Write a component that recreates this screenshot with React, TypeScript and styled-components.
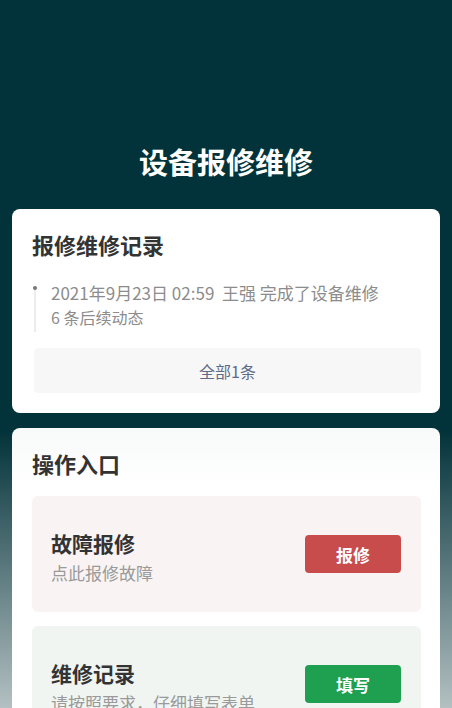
import React from "react";
import styled, { createGlobalStyle } from "styled-components";

const GlobalStyle = createGlobalStyle`
    html, body {
        margin: 0;
        padding: 0;
    }
    body {
        font-family: "Noto Sans CJK SC", "Noto Sans", sans-serif;
        background: #03333a;
    }
`;

const Page = styled.div`
    height: 708px;
    overflow: hidden;
    background: linear-gradient(to bottom, #03333a 0%, #03333a 61%, #b4c0c2 100%);
    padding: 141px 12px 0;
    box-sizing: border-box;
`;

const PageTitle = styled.h1`
    margin: 0 0 28px;
    text-align: center;
    color: #fff;
    font-size: 29px;
    line-height: 40px;
    font-weight: 700;
`;

const Card = styled.section<{ $fade?: boolean }>`
    background: ${({ $fade }) => ($fade ? "linear-gradient(to bottom, #f8f9f9, #fff 60px)" : "#fff")};
    border-radius: 8px;
    padding: 20px 19px 20px 20px;
    margin-bottom: 15px;
`;

const CardTitle = styled.h2`
    margin: 0;
    font-size: 22px;
    line-height: 30px;
    font-weight: 700;
    color: #333;
`;

const Timeline = styled.div`
    margin: 21px 0 0 2px;
    padding-left: 17px;
    position: relative;

    &::before {
        content: "";
        position: absolute;
        left: 0;
        top: 8px;
        bottom: -2px;
        width: 2px;
        background: #ececec;
    }

    &::after {
        content: "";
        position: absolute;
        left: -1px;
        top: 6px;
        width: 4px;
        height: 4px;
        border-radius: 50%;
        background: #777;
    }
`;

const TimelineLine = styled.div<{ $size: number }>`
    font-size: ${({ $size }) => $size}px;
    line-height: 25px;
    color: #8c8c8c;
    white-space: pre;
`;

const AllButton = styled.div`
    margin: 18px 0 0 2px;
    height: 45px;
    border-radius: 4px;
    background: #f7f7f8;
    color: #5e6b88;
    font-size: 16px;
    display: flex;
    align-items: center;
    justify-content: center;
`;

const ActionList = styled.div`
    margin-top: 18px;
    display: flex;
    flex-direction: column;
    gap: 14px;
`;

const ActionItem = styled.div<{ $tone: string }>`
    height: 116px;
    border-radius: 6px;
    background: ${({ $tone }) => $tone};
    display: flex;
    align-items: center;
    justify-content: space-between;
    padding: 0 20px 0 19px;
`;

const ActionText = styled.div`
    margin-top: 6px;
    display: flex;
    flex-direction: column;
    gap: 4px;
`;

const ActionTitle = styled.div`
    font-size: 21px;
    line-height: 28px;
    font-weight: 700;
    color: #333;
`;

const ActionSub = styled.div`
    font-size: 17px;
    line-height: 24px;
    color: #9a9a9a;
`;

const ActionButton = styled.button<{ $color: string }>`
    width: 96px;
    height: 38px;
    border: none;
    border-radius: 4px;
    background: ${({ $color }) => $color};
    color: #fff;
    font-family: inherit;
    font-size: 17px;
    font-weight: 700;
    padding: 0;
`;

const actions = [
    { title: "故障报修", sub: "点此报修故障", button: "报修", tone: "#f9f4f3", color: "#c74c4b" },
    { title: "维修记录", sub: "请按照要求，仔细填写表单", button: "填写", tone: "#f0f5f2", color: "#1f9f50" },
];

export default function App() {
    return (
        <Page>
            <GlobalStyle />
            <PageTitle>设备报修维修</PageTitle>
            <Card>
                <CardTitle>报修维修记录</CardTitle>
                <Timeline>
                    <TimelineLine $size={17}>{"2021年9月23日 02:59  王强 完成了设备维修"}</TimelineLine>
                    <TimelineLine $size={16}>{"6 条后续动态"}</TimelineLine>
                </Timeline>
                <AllButton>全部1条</AllButton>
            </Card>
            <Card $fade>
                <CardTitle>操作入口</CardTitle>
                <ActionList>
                    {actions.map((a) => (
                        <ActionItem key={a.title} $tone={a.tone}>
                            <ActionText>
                                <ActionTitle>{a.title}</ActionTitle>
                                <ActionSub>{a.sub}</ActionSub>
                            </ActionText>
                            <ActionButton $color={a.color}>{a.button}</ActionButton>
                        </ActionItem>
                    ))}
                </ActionList>
            </Card>
        </Page>
    );
}
